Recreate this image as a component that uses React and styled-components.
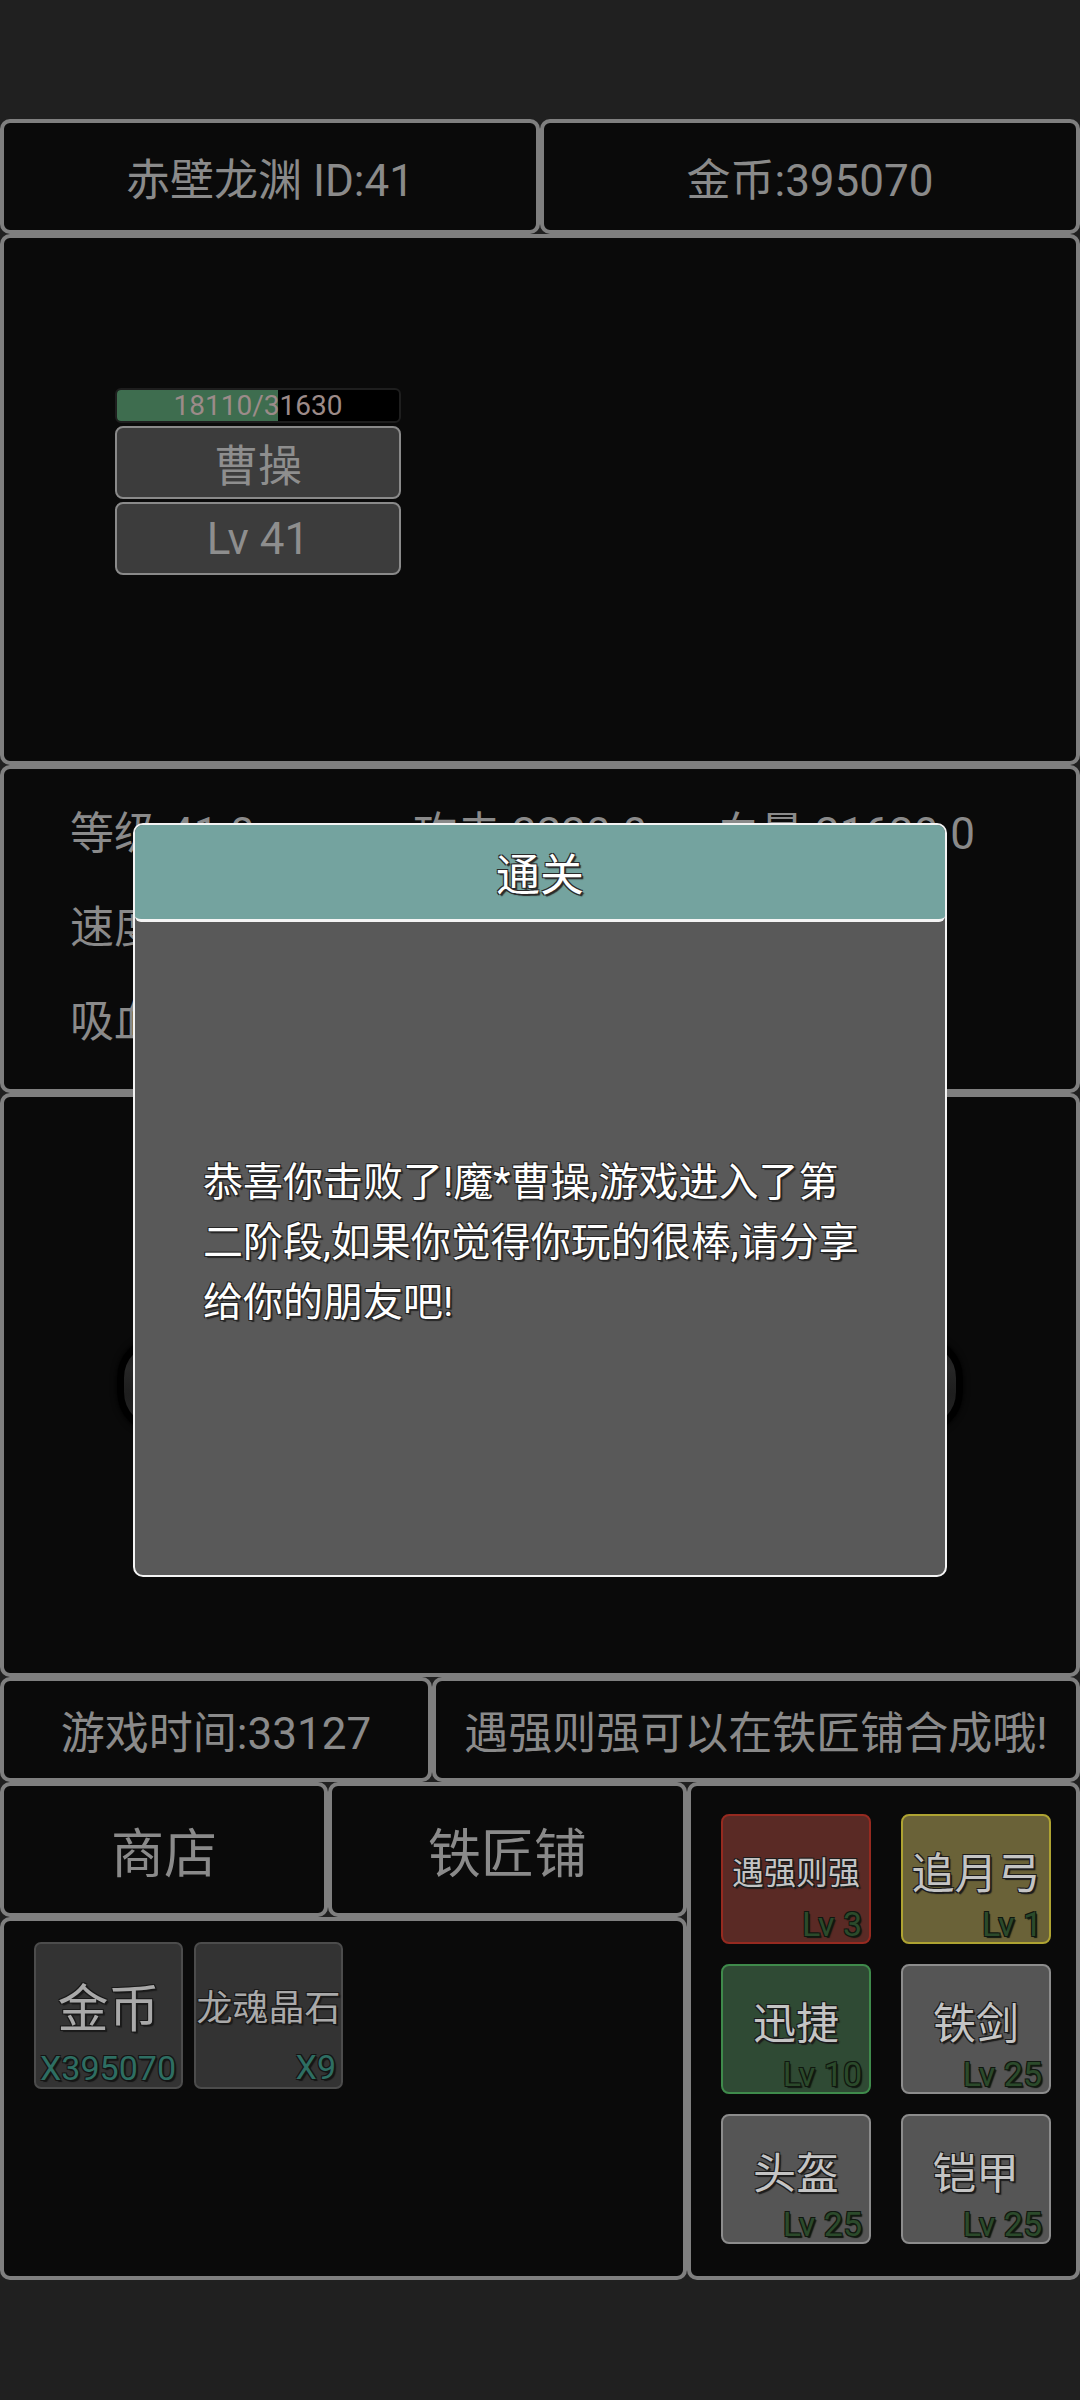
import React from "react";
import styled, { createGlobalStyle } from "styled-components";

const GlobalStyle = createGlobalStyle`
  * { box-sizing: border-box; }
  html, body { margin: 0; padding: 0; background: #202020; }
  body { font-family: Roboto, "Noto Sans CJK SC", "Noto Sans", sans-serif; }
`;

const outline = (c) =>
  `-1px -1px 0 ${c}, 1px -1px 0 ${c}, -1px 1px 0 ${c}, 1px 1px 0 ${c}, 2px 2px 1px ${c}`;

const Screen = styled.div`
  position: relative;
  width: 1080px;
  height: 2400px;
  background: #202020;
  padding-top: 119px;
  display: flex;
  flex-direction: column;
  overflow: hidden;
`;

const Row = styled.div`
  display: flex;
  height: ${(p) => p.$h}px;
  flex: none;
`;

const Box = styled.div`
  background: #0a0a0a;
  border: 4px solid #7f7f7f;
  border-radius: 10px;
  flex: ${(p) => (p.$w ? "none" : 1)};
  width: ${(p) => (p.$w ? `${p.$w}px` : "auto")};
  height: ${(p) => (p.$h ? `${p.$h}px` : "auto")};
`;

const TextCell = styled(Box)`
  display: flex;
  align-items: center;
  justify-content: center;
  color: #8a8a8a;
  font-size: ${(p) => p.$fs || 44}px;
  white-space: nowrap;
`;

/* battle */
const Battle = styled(Box)`
  flex: none;
  padding: 150px 0 0 111px;
`;

const EnemyCard = styled.div`
  width: 286px;
  display: flex;
  flex-direction: column;
  gap: 3px;
`;

const HpBar = styled.div`
  position: relative;
  height: 35px;
  background: #000;
  border: 2px solid #1e1e1e;
  border-radius: 6px;
  overflow: hidden;
`;

const HpFill = styled.div`
  height: 100%;
  background: #3e6d4f;
`;

const HpText = styled.span`
  position: absolute;
  inset: 0;
  display: flex;
  align-items: center;
  justify-content: center;
  font-size: 28px;
  color: #9c8b89;
`;

const InfoBox = styled.div`
  height: 73px;
  background: #3c3c3c;
  border: 2px solid #8a8a8a;
  border-radius: 8px;
  display: flex;
  align-items: center;
  justify-content: center;
  font-size: 44px;
  color: #8e8e8e;
`;

/* stats */
const Stats = styled(Box)`
  flex: none;
  padding: 14px 0 0 66px;
  display: grid;
  grid-template-columns: 343px 303px 1fr;
  grid-auto-rows: 94px;
  align-content: start;
`;

const Stat = styled.div`
  display: flex;
  align-items: center;
  font-size: 44px;
  color: #8a8a8a;
  white-space: nowrap;
`;

/* action */
const ActionArea = styled(Box)`
  flex: none;
  display: flex;
  align-items: center;
  justify-content: center;
`;

const BigButton = styled.div`
  width: 846px;
  height: 98px;
  border-radius: 42px;
  border: 7px solid #000;
  background: linear-gradient(#1c1c1c, #262626 30%, #1e1e1e 60%, #222 100%);
  box-shadow: 0 0 6px #000;
  display: flex;
  align-items: center;
  justify-content: center;
  color: #555;
  font-size: 44px;
`;

/* bottom */
const Column = styled.div`
  display: flex;
  flex-direction: column;
  width: ${(p) => p.$w}px;
  flex: none;
`;

const Inventory = styled(Box)`
  flex: 1;
  padding: 21px 0 0 30px;
  display: flex;
  align-items: flex-start;
  gap: 11px;
`;

const InvItem = styled.div`
  width: 149px;
  height: 147px;
  background: #333;
  border: 2px solid #4c4c4c;
  border-radius: 7px;
  display: flex;
  flex-direction: column;
  padding-top: 32px;
`;

const InvName = styled.div`
  height: 58px;
  display: flex;
  align-items: center;
  justify-content: center;
  font-size: ${(p) => p.$fs}px;
  color: #a9a9a9;
  white-space: nowrap;
  text-shadow: ${outline("#1a1a1a")};
`;

const InvQty = styled.div`
  margin-top: 14px;
  height: 40px;
  line-height: 40px;
  text-align: right;
  padding-right: 5px;
  font-size: 34px;
  color: #2e6e62;
  white-space: nowrap;
  text-shadow: ${outline("#151515")};
`;

const Equip = styled(Box)`
  padding: 28px 0 0 30px;
  display: grid;
  grid-template-columns: 150px 150px;
  grid-auto-rows: 130px;
  column-gap: 30px;
  row-gap: 20px;
  align-content: start;
`;

const tones = {
  red: { bg: "#5a2a25", bd: "#962a20" },
  yellow: { bg: "#6a6238", bd: "#aea332" },
  green: { bg: "#2f4a34", bd: "#3f8a4b" },
  gray: { bg: "#555555", bd: "#8c8c8c" },
};

const EquipItem = styled.div`
  background: ${(p) => tones[p.$tone].bg};
  border: 2px solid ${(p) => tones[p.$tone].bd};
  border-radius: 8px;
  display: flex;
  flex-direction: column;
  padding-top: 29px;
`;

const EquipName = styled.div`
  height: 50px;
  display: flex;
  align-items: center;
  justify-content: center;
  font-size: ${(p) => p.$fs}px;
  color: #c4c4c4;
  white-space: nowrap;
  text-shadow: ${outline("#1c1c1c")};
`;

const EquipLv = styled.div`
  margin-top: 11px;
  height: 36px;
  line-height: 36px;
  text-align: right;
  padding-right: 7px;
  font-size: 34px;
  color: #2b4a2b;
  white-space: nowrap;
  text-shadow: ${outline("#101810")};
`;

/* modal */
const Overlay = styled.div`
  position: absolute;
  inset: 0;
  display: flex;
  align-items: center;
  justify-content: center;
`;

const Dialog = styled.div`
  width: 814px;
  height: 754px;
  border: 2px solid #f4f4f4;
  border-radius: 10px;
  background: #595959;
  display: flex;
  flex-direction: column;
  overflow: hidden;
`;

const DialogTitle = styled.div`
  height: 97px;
  flex: none;
  background: #74a39f;
  border-bottom: 3px solid #f4f4f4;
  border-radius: 0 0 6px 6px;
  display: flex;
  align-items: center;
  justify-content: center;
  font-size: 44px;
  color: #fff;
  text-shadow: ${outline("#2a2a2a")};
`;

const DialogBody = styled.div`
  flex: 1;
  display: flex;
  align-items: center;
  padding: 0 72px 12px 68px;
`;

const DialogText = styled.p`
  margin: 0;
  font-size: 40px;
  line-height: 60px;
  color: #fff;
  text-shadow: ${outline("#262626")};
  word-break: break-all;
`;

const equipment = [
  { name: "遇强则强", lv: 3, tone: "red", fs: 32 },
  { name: "追月弓", lv: 1, tone: "yellow", fs: 43 },
  { name: "迅捷", lv: 10, tone: "green", fs: 43 },
  { name: "铁剑", lv: 25, tone: "gray", fs: 43 },
  { name: "头盔", lv: 25, tone: "gray", fs: 43 },
  { name: "铠甲", lv: 25, tone: "gray", fs: 43 },
];

const stats = [
  "等级 41.0", "攻击 3330.0", "血量 31630.0",
  "速度 1.0", "暴击 0.0", "闪避 0.0",
  "吸血 0.0", "反伤 0.0", "护甲 0.0",
];

export default function App() {
  const hp = 18110;
  const maxHp = 31630;
  return (
    <>
      <GlobalStyle />
      <Screen>
        <Row $h={115}>
          <TextCell>赤壁龙渊 ID:41</TextCell>
          <TextCell>金币:395070</TextCell>
        </Row>

        <Battle $h={531}>
          <EnemyCard>
            <HpBar>
              <HpFill style={{ width: `${(hp / maxHp) * 100}%` }} />
              <HpText>{hp}/{maxHp}</HpText>
            </HpBar>
            <InfoBox>曹操</InfoBox>
            <InfoBox>Lv 41</InfoBox>
          </EnemyCard>
        </Battle>

        <Stats $h={328}>
          {stats.map((s) => (
            <Stat key={s}>{s}</Stat>
          ))}
        </Stats>

        <ActionArea $h={584}>
          <BigButton>挑战</BigButton>
        </ActionArea>

        <Row $h={105}>
          <TextCell $w={432}>游戏时间:33127</TextCell>
          <TextCell>遇强则强可以在铁匠铺合成哦!</TextCell>
        </Row>

        <Row $h={498}>
          <Column $w={687}>
            <Row $h={135}>
              <TextCell $w={328} $fs={53}>商店</TextCell>
              <TextCell $fs={53}>铁匠铺</TextCell>
            </Row>
            <Inventory>
              <InvItem>
                <InvName $fs={51}>金币</InvName>
                <InvQty>X395070</InvQty>
              </InvItem>
              <InvItem>
                <InvName $fs={36}>龙魂晶石</InvName>
                <InvQty>X9</InvQty>
              </InvItem>
            </Inventory>
          </Column>
          <Equip>
            {equipment.map((e) => (
              <EquipItem key={e.name} $tone={e.tone}>
                <EquipName $fs={e.fs}>{e.name}</EquipName>
                <EquipLv>Lv {e.lv}</EquipLv>
              </EquipItem>
            ))}
          </Equip>
        </Row>

        <Overlay>
          <Dialog>
            <DialogTitle>通关</DialogTitle>
            <DialogBody>
              <DialogText>
                恭喜你击败了!魔*曹操,游戏进入了第二阶段,如果你觉得你玩的很棒,请分享给你的朋友吧!
              </DialogText>
            </DialogBody>
          </Dialog>
        </Overlay>
      </Screen>
    </>
  );
}
